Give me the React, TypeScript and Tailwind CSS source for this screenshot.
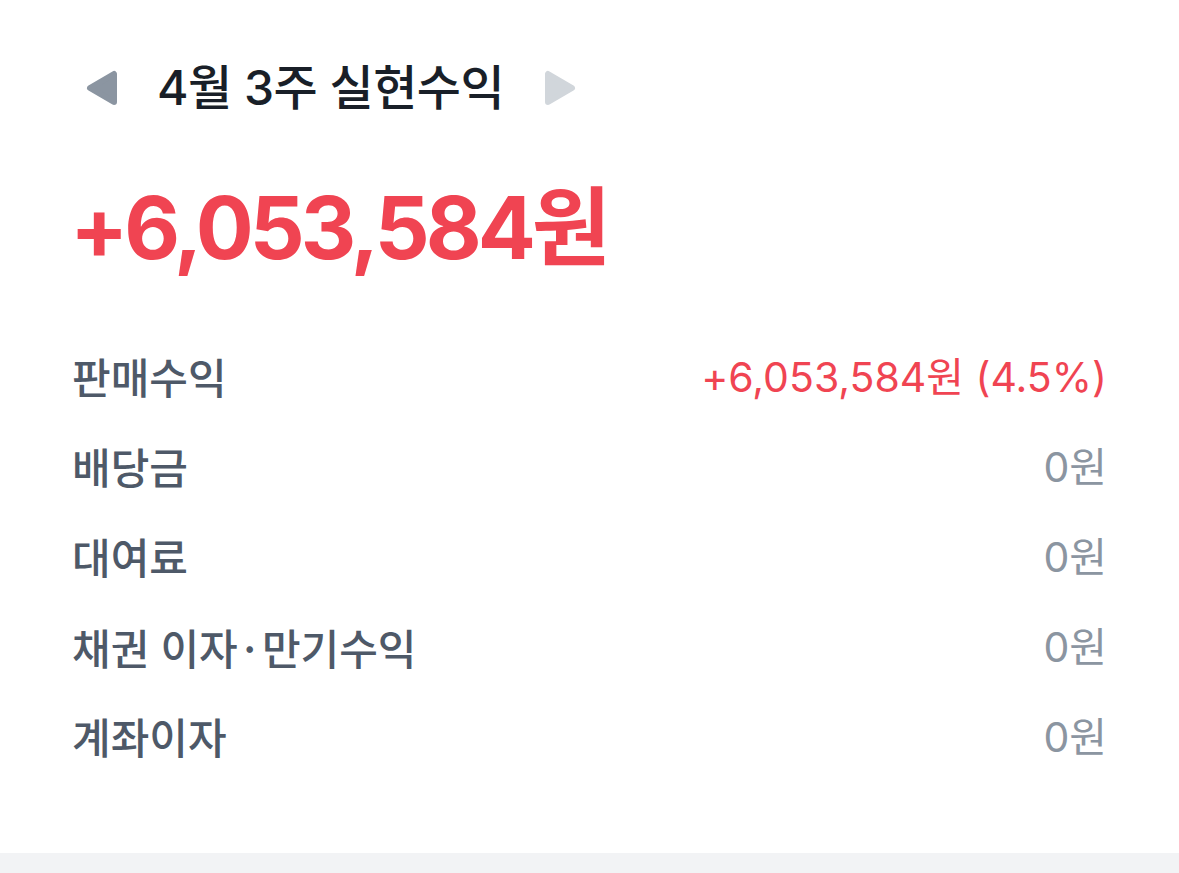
import React from "react";

const rows: { label: React.ReactNode; key: string; value: string; red?: boolean }[] = [
  { key: "a", label: "판매수익", value: "+6,053,584원 (4.5%)", red: true },
  { key: "b", label: "배당금", value: "0원" },
  { key: "c", label: "대여료", value: "0원" },
  {
    key: "d",
    label: (
      <>
        채권 이자<span className="font-['Noto_Sans_CJK_KR',sans-serif]">·</span>만기수익
      </>
    ),
    value: "0원",
  },
  { key: "e", label: "계좌이자", value: "0원" },
];

function Tri({ dir, color }: { dir: "left" | "right"; color: string }) {
  const pts = dir === "left" ? "28,4 28,32 4,18" : "4,4 4,32 28,18";
  return (
    <svg width="32" height="36" viewBox="0 0 32 36">
      <polygon points={pts} fill={color} stroke={color} strokeWidth="6" strokeLinejoin="round" />
    </svg>
  );
}

export default function App() {
  return (
    <div className="w-[1179px] h-[873px] bg-white flex flex-col font-['Inter','Noto_Sans_CJK_KR',sans-serif]">
      <div className="flex-1 px-[72px]">
        <div className="flex items-center pt-[60px] h-[116px] pl-[14px]">
          <Tri dir="left" color="#8b95a1" />
          <span className="ml-[39px] text-[48px] leading-none font-medium text-[#191f28] tracking-[-0.5px]">
            4월 3주 실현수익
          </span>
          <span className="ml-[40px] flex">
            <Tri dir="right" color="#d1d6db" />
          </span>
        </div>
        <div className="mt-[59px] h-[106px] flex items-center text-[86px] leading-none font-bold text-[#f04452] tracking-[-4px] -ml-[2px]">
          +6,053,584원
        </div>
        <div className="mt-[52px] flex flex-col">
          {rows.map((r) => (
            <div key={r.key} className="h-[90px] flex items-center justify-between">
              <span className="text-[42px] font-medium text-[#4e5968]">{r.label}</span>
              <span className={`text-[41px] ${r.red ? "text-[#f04452]" : "text-[#8b95a1]"}`}>
                {r.value}
              </span>
            </div>
          ))}
        </div>
      </div>
      <div className="h-[20px] bg-[#f2f3f5]" />
    </div>
  );
}
